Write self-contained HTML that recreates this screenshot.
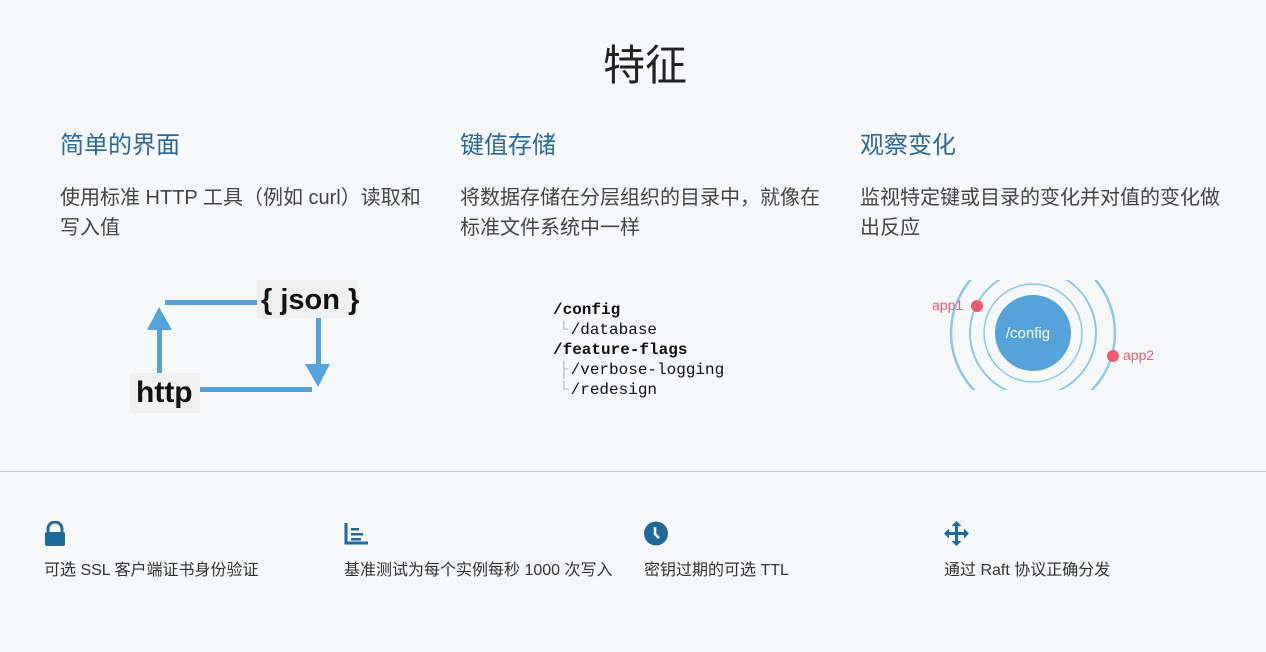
<!DOCTYPE html>
<html><head><meta charset="utf-8"><style>
body{margin:0;background:#f7f8fa;font-family:"Liberation Sans","Noto Sans CJK SC",sans-serif;width:1266px;height:652px;position:relative;overflow:hidden;color:#333}
.a{position:absolute}
h1{position:absolute;top:38px;left:12px;width:1266px;text-align:center;margin:0;font-weight:400;font-size:42px;color:#222;line-height:56px}
h3{position:absolute;margin:0;font-weight:400;font-size:24px;color:#2a6a9a;top:129px;line-height:34px}
p{position:absolute;margin:0;font-size:20px;color:#444;line-height:30px;top:183px;white-space:nowrap}
.f{position:absolute;top:560px;font-size:16px;color:#333;line-height:22px}
.mono{font-family:"Liberation Mono",monospace;font-size:16px;line-height:20px;color:#111}
.t{color:#bbb;margin-left:6px;margin-right:2px}
</style></head><body>
<h1>特征</h1>
<h3 style="left:60px">简单的界面</h3>
<h3 style="left:460px">键值存储</h3>
<h3 style="left:860px">观察变化</h3>
<p style="left:60px">使用标准 HTTP 工具（例如 curl）读取和<br>写入值</p>
<p style="left:460px">将数据存储在分层组织的目录中，就像在<br>标准文件系统中一样</p>
<p style="left:860px">监视特定键或目录的变化并对值的变化做<br>出反应</p>

<svg class="a" style="left:120px;top:270px" width="260" height="150">
<g fill="#55a3da" stroke="none">
<rect x="45" y="30" width="95" height="5"/>
<rect x="37" y="55" width="5" height="50"/>
<polygon points="27,60 52,60 39,37"/>
<rect x="196" y="48" width="5" height="50"/>
<polygon points="185,94 210,94 198,117"/>
<rect x="80" y="117" width="112" height="5"/>
</g>
<rect x="137" y="10" width="100" height="38" fill="#f0f0f0"/>
<text x="141" y="39" font-family="Liberation Sans,sans-serif" font-weight="bold" font-size="29" fill="#111">{ json }</text>
<rect x="10" y="103" width="70" height="40" fill="#f0f0f0"/>
<text x="16" y="132" font-family="Liberation Sans,sans-serif" font-weight="bold" font-size="30" fill="#111">http</text>
</svg>

<div class="a mono" style="left:553px;top:300px">
<b>/config</b><br>
<span class="t">└</span>/database<br>
<b>/feature-flags</b><br>
<span class="t">├</span>/verbose-logging<br>
<span class="t">└</span>/redesign
</div>

<svg class="a" style="left:920px;top:270px" width="260" height="130">
<defs><clipPath id="c"><rect x="0" y="10" width="260" height="110"/></clipPath></defs>
<g clip-path="url(#c)" fill="none" stroke="#8ac8ee">
<circle cx="113" cy="63" r="49" stroke-width="1.5"/>
<circle cx="113" cy="63" r="63" stroke-width="2"/>
<circle cx="113" cy="63" r="82" stroke-width="2.5"/>
</g>
<circle cx="113" cy="63" r="38" fill="#55a3da"/>
<text x="108" y="68" text-anchor="middle" font-family="Liberation Sans,sans-serif" font-size="15" fill="#fff">/config</text>
<circle cx="57" cy="36" r="6" fill="#f05a6a"/>
<text x="12" y="40" font-family="Liberation Sans,sans-serif" font-size="14" fill="#f05a6a">app1</text>
<circle cx="193" cy="86" r="6" fill="#f05a6a"/>
<text x="203" y="90" font-family="Liberation Sans,sans-serif" font-size="14" fill="#f05a6a">app2</text>
</svg>

<div class="a" style="left:0;top:471px;width:1266px;height:1px;background:#ccc"></div>

<svg class="a" style="left:44px;top:521px" width="22" height="26"><path d="M4 11V8a7 7 0 0 1 14 0v3" fill="none" stroke="#1e6a9c" stroke-width="3"/><rect x="1" y="11" width="20" height="14" rx="2" fill="#1e6a9c"/></svg>
<svg class="a" style="left:344px;top:522px" width="26" height="24"><path d="M2 1v20h22" fill="none" stroke="#1e6a9c" stroke-width="3"/><rect x="7" y="6" width="8" height="2.5" fill="#1e6a9c"/><rect x="7" y="11" width="12" height="2.5" fill="#1e6a9c"/><rect x="7" y="16" width="10" height="2.5" fill="#1e6a9c"/></svg>
<svg class="a" style="left:644px;top:521px" width="26" height="26"><circle cx="12" cy="12.5" r="12" fill="#1e6a9c"/><path d="M11 6v7l4 4" fill="none" stroke="#fff" stroke-width="2.5"/></svg>
<svg class="a" style="left:944px;top:521px" width="26" height="26"><path d="M12.5 2v21M2 12.5h21" stroke="#1e6a9c" stroke-width="3"/><path d="M12.5 0l5 5h-10zM12.5 25l5-5h-10zM0 12.5l5 5v-10zM25 12.5l-5 5v-10z" fill="#1e6a9c"/></svg>

<div class="f" style="left:44px">可选 SSL 客户端证书身份验证</div>
<div class="f" style="left:344px">基准测试为每个实例每秒 1000 次写入</div>
<div class="f" style="left:644px">密钥过期的可选 TTL</div>
<div class="f" style="left:944px">通过 Raft 协议正确分发</div>
</body></html>
